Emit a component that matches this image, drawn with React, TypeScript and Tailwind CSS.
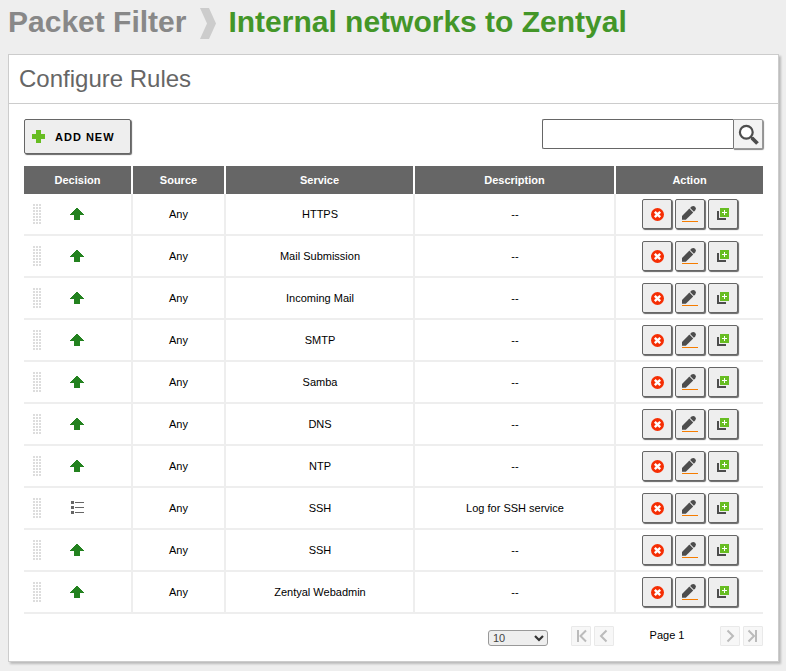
import React from "react";

type Rule = { decision: "accept" | "log"; source: string; service: string; description: string };

const rules: Rule[] = [
  { decision: "accept", source: "Any", service: "HTTPS", description: "--" },
  { decision: "accept", source: "Any", service: "Mail Submission", description: "--" },
  { decision: "accept", source: "Any", service: "Incoming Mail", description: "--" },
  { decision: "accept", source: "Any", service: "SMTP", description: "--" },
  { decision: "accept", source: "Any", service: "Samba", description: "--" },
  { decision: "accept", source: "Any", service: "DNS", description: "--" },
  { decision: "accept", source: "Any", service: "NTP", description: "--" },
  { decision: "log", source: "Any", service: "SSH", description: "Log for SSH service" },
  { decision: "accept", source: "Any", service: "SSH", description: "--" },
  { decision: "accept", source: "Any", service: "Zentyal Webadmin", description: "--" },
];

const columns = "grid grid-cols-[107px_91px_187px_199px_147px] gap-x-[2px]";

function DragHandle() {
  return (
    <svg width="8" height="20" shapeRendering="crispEdges" fill="#ddd">
      {[0, 3, 6, 9, 12, 15, 18].map((y) =>
        [0, 3, 6].map((x) => <rect key={`${x}-${y}`} x={x} y={y} width="2" height="2" />)
      )}
    </svg>
  );
}

function AcceptIcon() {
  return (
    <svg width="14" height="12" shapeRendering="crispEdges" fill="#23821f">
      {[0, 1, 2, 3, 4, 5, 6].map((y) => (
        <rect key={y} x={6 - y} y={y} width={2 + 2 * y} height="1" />
      ))}
      <rect x="4" y="7" width="6" height="5" />
    </svg>
  );
}

function LogIcon() {
  return (
    <svg width="14" height="14" shapeRendering="crispEdges" fill="#666">
      {[0, 5, 10].map((y) => (
        <g key={y}>
          <rect x="1" y={y} width="3" height="3" />
          <rect x="5" y={y + 1} width="9" height="1" />
        </g>
      ))}
    </svg>
  );
}

function ActionButton({ label, children }: { label: string; children: React.ReactNode }) {
  return (
    <button
      aria-label={label}
      className="h-[30px] w-[30px] rounded-[2px] border border-[#666] bg-[#eee] shadow-[1px_1px_1px_#666]"
    >
      <svg width="28" height="28">{children}</svg>
    </button>
  );
}

function RowActions() {
  return (
    <div className="mt-[5px] ml-[26px] flex gap-[3px]">
      <ActionButton label="Delete">
        <circle cx="14.5" cy="14.5" r="6.5" fill="#f52e04" />
        <path d="M11.8 11.8L17.2 17.2M17.2 11.8L11.8 17.2" stroke="#fff" strokeWidth="2.4" />
      </ActionButton>
      <ActionButton label="Edit">
        <path d="M6 19.8V16L13.4 8.6L17.2 12.4L9.8 19.8Z" fill="#4d4d4d" />
        <path d="M14.1 7.9L15.5 6.6Q17.4 5.2 19.1 6.8T19.3 10.3L17.9 11.7Z" fill="#4d4d4d" />
        <path d="M6 21.5H22" stroke="#f57c00" />
      </ActionButton>
      <ActionButton label="Clone">
        <path d="M8 11H10V18H17V20H8Z" fill="#4d4d4d" />
        <path d="M11 8H20V17H11Z" fill="#67bd22" />
        <path d="M15.5 10V15M13 12.5H18" stroke="#fff" />
      </ActionButton>
    </div>
  );
}

function PageButton({ label, path }: { label: string; path: string }) {
  return (
    <button aria-label={label} className="h-5 w-5 rounded-[1px] border border-[#e9e9e9] bg-[#f7f7f7]">
      <svg width="18" height="18" fill="none" stroke="#bbb" strokeWidth="2">
        <path d={path} />
      </svg>
    </button>
  );
}

export default function App() {
  return (
    <div className="h-[671px] w-[786px] overflow-hidden bg-[#eee] font-['Liberation_Sans',Arial,sans-serif] text-[11px] text-black">
      <h1 className="flex h-[54px] pl-2 text-[30px] leading-[44px] font-bold whitespace-nowrap">
        <span className="w-[192px] text-[#888]">Packet Filter</span>
        <svg className="mt-2 mr-[12.4px] shrink-0" width="16" height="31">
          <path d="M0 0H9L16 15.5L9 31H0L7 15.5Z" fill="#ccc" />
        </svg>
        <span className="text-[#439628]">Internal networks to Zentyal</span>
      </h1>

      <main className="ml-2 h-[608px] w-[771px] border border-[#ccc] bg-white shadow-[2px_2px_2px_#bbb]">
        <h2 className="h-[49px] border-b border-[#ccc] pl-[10px] text-[24px] leading-[48px] text-[#666]">
          Configure Rules
        </h2>

        <div className="mx-[15px] pt-[15px]">
          <div className="flex h-[47px] items-start justify-between">
            <button className="flex h-[35px] w-[107px] items-center rounded-[2px] border border-[#666] bg-[#eee] pl-[7px] text-[11px] font-bold tracking-[1px] shadow-[1px_1px_1px_#666]">
              <svg width="13" height="13" className="mr-[10px] shrink-0">
                <path d="M4 0H9V4H13V9H9V13H4V9H0V4H4Z" fill="#67bd22" />
              </svg>
              <span className="pt-[2px]">ADD NEW</span>
            </button>
            <div className="flex">
              <input
                aria-label="Search"
                className="h-[30px] w-[191px] rounded-l-[2px] border border-r-0 border-[#666] bg-white outline-none"
              />
              <button
                aria-label="Search rules"
                className="h-[30px] w-[30px] rounded-r-[2px] border border-[#999] border-l-[#777] bg-[#f3f3f3] shadow-[1px_1px_1px_#888]"
              >
                <svg width="28" height="28" fill="none" stroke="#4d4d4d">
                  <circle cx="12.3" cy="12.3" r="6.4" strokeWidth="2.2" fill="#fff" />
                  <path d="M16.8 16.8L19 19" strokeWidth="2.4" />
                  <path d="M18 18L23.5 23.5" strokeWidth="3.8" />
                </svg>
              </button>
            </div>
          </div>

          <div className={`${columns} text-center leading-[28px] font-bold text-white`}>
            {["Decision", "Source", "Service", "Description", "Action"].map((name) => (
              <div key={name} className="h-7 bg-[#666]">{name}</div>
            ))}
          </div>
          {rules.map((rule, i) => (
            <div key={i} className={`${columns} border-b-2 border-[#eee] bg-[#eee] text-center leading-[40px]`}>
              <div className="flex h-10 items-center bg-white pl-[9px]">
                <DragHandle />
                <div className="ml-[29px]">{rule.decision === "accept" ? <AcceptIcon /> : <LogIcon />}</div>
              </div>
              <div className="bg-white">{rule.source}</div>
              <div className="bg-white pl-px">{rule.service}</div>
              <div className="bg-white pl-px">{rule.description}</div>
              <div className="bg-white"><RowActions /></div>
            </div>
          ))}

          <div className="flex pt-3">
            <div className="mt-1 ml-[464px] flex h-4 w-[60px] items-center justify-between rounded-[3px] border border-[#999] bg-[#eee] pr-[3px] pl-1 text-[11px] text-[#444]">
              <span className="leading-[14px]">10</span>
              <svg width="10" height="7" fill="none" stroke="#333" strokeWidth="2.2">
                <path d="M1 1L5 5L9 1" />
              </svg>
            </div>
            <div className="ml-[23px] flex gap-[3px]">
              <PageButton label="First page" path="M6 3V15M14 3.5L8.5 9L14 14.5" />
              <PageButton label="Previous page" path="M11.5 3.5L6 9L11.5 14.5" />
            </div>
            <span className="w-[106px] text-center leading-[18px]">Page 1</span>
            <div className="flex gap-[3px]">
              <PageButton label="Next page" path="M6.5 3.5L12 9L6.5 14.5" />
              <PageButton label="Last page" path="M4.5 3.5L10 9L4.5 14.5M12 3V15" />
            </div>
          </div>
        </div>
      </main>
    </div>
  );
}
